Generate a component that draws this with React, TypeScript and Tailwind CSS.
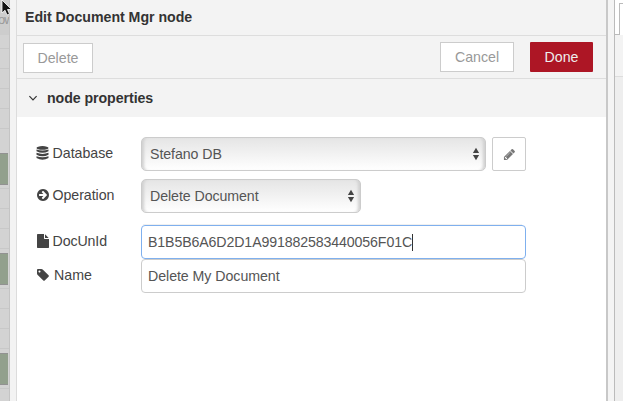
import type { ReactNode } from "react";

const ICONS = {
  arrow:
    "M1413 896q0-27-18-45l-91-91-362-362q-18-18-45-18t-45 18l-91 91q-18 18-18 45t18 45l189 189h-502q-26 0-45 19t-19 45v128q0 26 19 45t45 19h502l-189 189q-19 19-19 45t19 45l91 91q18 18 45 18t45-18l362-362 91-91q18-18 18-45zm251 0q0 209-103 385.5t-279.5 279.5-385.5 103-385.5-103-279.5-279.5-103-385.5 103-385.5 279.5-279.5 385.5-103 385.5 103 279.5 279.5 103 385.5z",
  file: "M1152 512v-472q22 14 36 28l408 408q14 14 28 36h-472zm-128 32q0 40 28 68t68 28h544v1056q0 40-28 68t-68 28h-1344q-40 0-68-28t-28-68v-1600q0-40 28-68t68-28h800v544z",
  tag: "M576 448q0-53-37.5-90.5t-90.5-37.5-90.5 37.5-37.5 90.5 37.5 90.5 90.5 37.5 90.5-37.5 37.5-90.5zm1067 576q0 53-37 90l-491 492q-39 37-91 37-53 0-90-37l-715-716q-38-37-64.5-101t-26.5-117v-416q0-52 38-90t90-38h416q53 0 117 26.5t102 64.5l715 714q37 39 37 91z",
  pencil:
    "M491 1536l91-91-235-235-91 91v107h128v128h107zm523-928q0-22-22-22-10 0-17 7l-542 542q-7 7-7 17 0 22 22 22 10 0 17-7l542-542q7-7 7-17zm-54-192l416 416-832 832h-416v-416zm683 96q0 53-37 90l-166 166-416-416 166-165q36-38 90-38 53 0 91 38l235 234q37 39 37 91z",
};

function Icon({ name, className }: { name: keyof typeof ICONS; className: string }) {
  return (
    <svg viewBox="0 0 1792 1792" fill="currentColor" className={`shrink-0 overflow-visible ${className}`}>
      <path d={ICONS[name]} />
    </svg>
  );
}

function DatabaseIcon() {
  return (
    <svg viewBox="-0.5 0 14 14" fill="currentColor" className="size-[14px] shrink-0">
      <ellipse cx="6" cy="1.9" rx="6" ry="1.8" />
      <path d="M0 3.400Q6 5.600 12 3.400v1.900Q6 8.400 0 5.300z" />
      <path d="M0 6.800Q6 9 12 6.800v1.900Q6 11.800 0 8.700z" />
      <path d="M0 10.200Q6 12.400 12 10.200v1.900Q6 15.200 0 12.100z" />
    </svg>
  );
}

function Row({ icon, label, className, labelClass, children }: {
  icon: ReactNode;
  label: string;
  className: string;
  labelClass: string;
  children: ReactNode;
}) {
  return (
    <div className={`flex h-[34px] shrink-0 items-center ${className}`}>
      <div className="flex w-[105px] shrink-0 items-center pb-[2px]">
        {icon}
        <span className={labelClass}>{label}</span>
      </div>
      {children}
    </div>
  );
}

function Select({ value, className }: { value: string; className: string }) {
  return (
    <div
      className={`flex h-[34px] items-center justify-between rounded-[5px] border border-[#ccc] bg-linear-to-b from-[#e5e5e5] to-white pr-[5px] pl-[8px] text-[#555] shadow-[inset_4px_0_3px_-2px_#d0d0d0,inset_-4px_0_3px_-2px_#d0d0d0] ${className}`}
    >
      <span className="tracking-[-0.07px]">{value}</span>
      <svg viewBox="0 0 8 14" className="h-[14px] w-[8px]" fill="#444">
        <path d="M4 .8 7.1 6H.9zM4 13.2 7.1 8H.9z" />
      </svg>
    </div>
  );
}

function Canvas() {
  return (
    <div className="flex w-[9px] shrink-0 flex-col bg-[#d3d3d3]">
      <div className="flex h-[35px] shrink-0 items-center bg-[#cdcdcd] pt-[4px] text-[13px] tracking-[-1px] text-[#999]">
        <span className="-ml-[2px]">ow</span>
      </div>
      <div className="h-[14px] shrink-0 border-b border-[#c8c8c8]" />
      <div className="h-5 shrink-0 border-b border-[#c8c8c8]" />
      <div className="h-5 shrink-0 border-b border-[#c8c8c8]" />
      <div className="h-5 shrink-0 border-b border-[#c8c8c8]" />
      <div className="h-5 shrink-0 border-b border-[#c8c8c8]" />
      <div className="h-6 shrink-0" />
      {[0, 1, 2].map((n) => (
        <div key={n} className="shrink-0">
          <div className="mr-px h-[32px] border-y border-[#929292] bg-[#92a08d]" />
          <div className="h-[4px] border-b border-[#c8c8c8]" />
          <div className="h-[20px] border-b border-[#c8c8c8]" />
          <div className="h-[20px] border-b border-[#c8c8c8]" />
          <div className="h-[20px] border-b border-[#c8c8c8]" />
          <div className="h-[4px]" />
        </div>
      ))}
    </div>
  );
}

export default function App() {
  return (
    <div className="relative flex h-[401px] w-[623px] overflow-hidden bg-white font-['Liberation_Sans',Arial,sans-serif] text-[14.2px] leading-[20px] text-[#555]">
      <Canvas />
      <div className="relative w-[8px] shrink-0 border-r border-l border-l-[#c4c4c4] border-r-[#dcdcdc] bg-[#f3f3f3]" />

      <main className="relative flex w-[589px] shrink-0 flex-col bg-white">
        <header className="flex h-[36px] shrink-0 items-center border-b border-[#ddd] bg-[#f3f3f3] pb-px pl-[8px] font-bold text-[#333]">
          <h1 className="tracking-[-0.03px]">Edit Document Mgr node</h1>
        </header>
        <div className="flex h-[43px] shrink-0 items-center border-b border-[#ddd] bg-[#f3f3f3] pr-[13px] pl-[6px] text-[#999]">
          <button className="mt-[2px] h-[30px] w-[70px] border border-[#ccc] bg-white">Delete</button>
          <button className="ml-auto h-[30px] w-[74px] border border-[#ccc] bg-white">Cancel</button>
          <button className="ml-4 h-[30px] w-[63px] rounded-[1px] bg-[#ad1625] text-[#eee]">Done</button>
        </div>
        <div className="flex h-[38px] shrink-0 items-center bg-[#f3f3f3] pl-[11px] font-bold text-[#333]">
          <svg viewBox="0 0 10 8" className="h-[8px] w-[10px]" fill="none" stroke="#333" strokeWidth="1.2">
            <path d="M1.400 2.200 5 5.800 8.600 2.200" />
          </svg>
          <span className="ml-[9px] tracking-[-0.07px]">node properties</span>
        </div>

        <form className="flex flex-col pl-[19px] text-[#444]">
          <Row icon={<DatabaseIcon />} label="Database" className="mt-[20px]" labelClass="ml-[2.5px]">
            <Select value="Stefano DB" className="w-[345px]" />
            <button type="button" className="ml-[6px] flex h-[34px] w-[34px] items-center justify-center rounded-[2px] border border-[#ccc] bg-white text-[#777]">
              <Icon name="pencil" className="size-[13px]" />
            </button>
          </Row>
          <Row icon={<Icon name="arrow" className="size-[14px]" />} label="Operation" className="mt-[8px]" labelClass="ml-[2.5px] tracking-[-0.05px]">
            <Select value="Delete Document" className="w-[220px]" />
          </Row>
          <div className="mt-[11px] ml-[107px] h-px w-[379px] bg-[#f0f0f0]" />
          <Row icon={<Icon name="file" className="size-[14px]" />} label="DocUnId" className="" labelClass="ml-[2.5px] tracking-[-0.1px]">
            <div className="flex h-[34px] w-[385px] items-center rounded-[4px] border border-[#7fb0ee] bg-white pl-[6px] text-[#555]">
              <span className="tracking-[-0.13px]">B1B5B6A6D2D1A991882583440056F01C</span>
              <span className="h-[17px] w-px bg-[#333]" />
            </div>
          </Row>
          <Row icon={<Icon name="tag" className="size-[14px]" />} label="Name" className="" labelClass="ml-[4px]">
            <div className="flex h-[34px] w-[385px] items-center rounded-[4px] border border-[#ccc] bg-white pl-[6px] tracking-[-0.05px] text-[#555]">
              Delete My Document
            </div>
          </Row>
        </form>
      </main>

      <div className="w-[9px] shrink-0 border-r border-l-2 border-r-[#bbb] border-l-[#c8c8c8] bg-[#f4f4f4]" />
      <aside className="flex w-[8px] flex-col bg-[#eee]">
        <div className="flex h-[35px] flex-col bg-white pt-[3px]">
          <div className="flex h-full">
            <div className="w-[4px] border-b border-[#bbb]" />
            <div className="w-[4px] border-t border-l border-[#bbb]" />
          </div>
        </div>
        <div className="h-[42px] border-b border-[#ddd] bg-[#f3f3f3]" />
      </aside>

      <svg viewBox="0 0 12 18" className="absolute top-[-1px] left-[1px] h-[18px] w-[12px]">
        <path d="M1 1v13l3-2.800L6 16l2.500-1L6.500 10.500H10.500z" fill="#111" stroke="#fff" strokeWidth=".8" />
      </svg>
    </div>
  );
}
